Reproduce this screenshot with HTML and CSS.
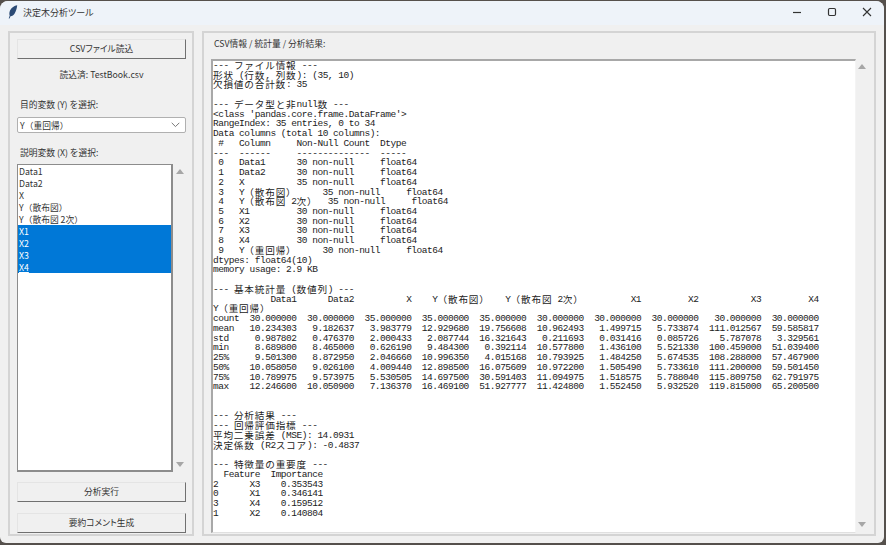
FILE: index.html
```html
<!DOCTYPE html>
<html lang="ja">
<head>
    <meta charset="UTF-8">
    <title>決定木分析ツール</title>
    <link rel="stylesheet" href="styles.css">
</head>
<body>
    <div class="window">
        <!-- Title bar -->
        <div class="titlebar">
            <svg class="app-icon" width="10" height="14" viewBox="0 0 10 14">
                <path d="M9.2 0.3C6.4 0.8 3.4 2.6 2 5.4C1.2 7.2 1.2 9.2 1.7 10.6L0.7 13.4L1.5 13.6L2.5 11.2C4.2 11.2 5.8 10 6.8 8.2C8.2 5.8 9 3 9.2 0.3Z" fill="#2b4a75"/>
            </svg>
            <span class="title">決定木分析ツール</span>
            <div class="win-controls">
                <svg width="12" height="12" viewBox="0 0 12 12"><path d="M2 6.5H10" stroke="#333" stroke-width="1.2"/></svg>
                <svg width="12" height="12" viewBox="0 0 12 12"><rect x="2.5" y="2.5" width="7" height="7" rx="1.2" fill="none" stroke="#333" stroke-width="1.2"/></svg>
                <svg width="12" height="12" viewBox="0 0 12 12"><path d="M2 2L10 10M10 2L2 10" stroke="#333" stroke-width="1.1"/></svg>
            </div>
        </div>

        <div class="content">
            <!-- Left controls -->
            <div class="panel left-panel">
                <button class="tk-button">CSVファイル読込</button>
                <div class="loaded-label">読込済: TestBook.csv</div>
                <div class="field-label target-label">目的変数 (Y) を選択:</div>
                <div class="combo">
                    <span>Y（重回帰）</span>
                    <svg width="9" height="6" viewBox="0 0 9 6"><path d="M0.7 0.8L4.5 4.6L8.3 0.8" fill="none" stroke="#777" stroke-width="1"/></svg>
                </div>
                <div class="field-label feature-label">説明変数 (X) を選択:</div>
                <div class="list-row">
                    <ul class="listbox">
                        <li>Data1</li>
                        <li>Data2</li>
                        <li>X</li>
                        <li>Y（散布図）</li>
                        <li>Y（散布図 2次）</li>
                        <li class="selected">X1</li>
                        <li class="selected">X2</li>
                        <li class="selected">X3</li>
                        <li class="selected active">X4</li>
                    </ul>
                    <div class="scrollbar list-scroll">
                        <span class="arrow-up"></span>
                        <span class="arrow-down"></span>
                    </div>
                </div>
                <button class="tk-button run-button">分析実行</button>
                <button class="tk-button summary-button">要約コメント生成</button>
            </div>

            <!-- Output -->
            <div class="panel right-panel">
                <div class="output-label">CSV情報 / 統計量 / 分析結果:</div>
                <div class="output-row">
<pre class="output">--- <span class="jp">ファイル情報</span> ---
<span class="jp">形状</span> (<span class="jp">行数</span>, <span class="jp">列数</span>): (35, 10)
<span class="jp">欠損値の合計数</span>: 35

--- <span class="jp">データ型と非</span>null<span class="jp">数</span> ---
&lt;class 'pandas.core.frame.DataFrame'&gt;
RangeIndex: 35 entries, 0 to 34
Data columns (total 10 columns):
 #   Column     Non-Null Count  Dtype
---  ------     --------------  -----
 0   Data1      30 non-null     float64
 1   Data2      30 non-null     float64
 2   X          35 non-null     float64
 3   Y<span class="jp">（散布図）</span>     35 non-null     float64
 4   Y<span class="jp">（散布図</span> 2<span class="jp">次）</span>  35 non-null     float64
 5   X1         30 non-null     float64
 6   X2         30 non-null     float64
 7   X3         30 non-null     float64
 8   X4         30 non-null     float64
 9   Y<span class="jp">（重回帰）</span>     30 non-null     float64
dtypes: float64(10)
memory usage: 2.9 KB

--- <span class="jp">基本統計量</span> (<span class="jp">数値列</span>) ---
           Data1      Data2          X    Y<span class="jp">（散布図）</span>   Y<span class="jp">（散布図</span> 2<span class="jp">次）</span>         X1         X2          X3         X4
Y<span class="jp">（重回帰）</span>
count  30.000000  30.000000  35.000000  35.000000  35.000000  30.000000  30.000000  30.000000   30.000000  30.000000
mean   10.234303   9.182637   3.983779  12.929680  19.756608  10.962493   1.499715   5.733874  111.012567  59.585817
std     0.987802   0.476370   2.000433   2.087744  16.321643   0.211693   0.031416   0.085726    5.787078   3.329561
min     8.689800   8.465000   0.626190   9.484300   0.392114  10.577800   1.436100   5.521330  100.459000  51.039400
25%     9.501300   8.872950   2.046660  10.996350   4.015168  10.793925   1.484250   5.674535  108.288000  57.467900
50%    10.058050   9.026100   4.009440  12.898500  16.075609  10.972200   1.505490   5.733610  111.200000  59.501450
75%    10.789975   9.573975   5.530505  14.697500  30.591403  11.094975   1.518575   5.788040  115.809750  62.791975
max    12.246600  10.050900   7.136370  16.469100  51.927777  11.424800   1.552450   5.932520  119.815000  65.200500


--- <span class="jp">分析結果</span> ---
--- <span class="jp">回帰評価指標</span> ---
<span class="jp">平均二乗誤差</span> (MSE): 14.0931
<span class="jp">決定係数</span> (R2<span class="jp">スコア</span>): -0.4837

--- <span class="jp">特徴量の重要度</span> ---
  Feature  Importance
2      X3    0.353543
0      X1    0.346141
3      X4    0.159512
1      X2    0.140804</pre>
                    <div class="scrollbar output-scroll">
                        <span class="arrow-up"></span>
                        <span class="arrow-down"></span>
                    </div>
                </div>
            </div>
        </div>
    </div>
</body>
</html>
```

FILE: styles.css
```css
html,
body {
    height: 100%;
}

body {
    margin: 0;
    background-color: #55504c;
    font-family: "Noto Sans CJK JP", sans-serif;
    font-size: 8.75px;
    color: #333;
    overflow: hidden;
}

.window {
    box-sizing: border-box;
    display: flex;
    flex-direction: column;
    width: 884px;
    height: 542px;
    margin-top: 1px;
    background-color: #f0f0f0;
    border-radius: 8px 8px 6px 6px;
}

/* Title bar */
.titlebar {
    box-sizing: border-box;
    display: flex;
    align-items: center;
    height: 24px;
    flex-shrink: 0;
    padding: 0 0 2px 8px;
    background-color: #eef3f9;
    border-radius: 8px 8px 0 0;
}

.app-icon {
    margin-right: 5px;
}

.title {
    font-size: 9px;
    font-feature-settings: "palt";
    color: #333;
}

.win-controls {
    display: flex;
    align-items: center;
    gap: 23px;
    margin-left: auto;
    margin-right: 11px;
}

/* Main layout */
.content {
    display: flex;
    flex: 1;
    min-height: 0;
    gap: 8px;
    padding: 6px 8px 7px 8px;
}

.panel {
    box-sizing: border-box;
    display: flex;
    flex-direction: column;
    border: 2px solid #d4d4d4;
}

.left-panel {
    width: 186px;
    padding: 6px 6px 1px 7px;
}

.right-panel {
    flex: 1;
    min-width: 0;
    padding: 4px 6px 1px 7px;
}

/* Left controls */
.tk-button {
    height: 20px;
    flex-shrink: 0;
    padding: 0 0 2px 0;
    background-color: #f0f0f0;
    border: 1px solid;
    border-color: #e4e4e4 #707070 #707070 #e4e4e4;
    font-family: inherit;
    font-size: 8.75px;
    font-feature-settings: "palt";
    color: #333;
}

.run-button {
    margin-top: 10px;
}

.summary-button {
    margin-top: 11px;
}

.loaded-label {
    margin-top: 9px;
    height: 14px;
    line-height: 14px;
    text-align: center;
}

.field-label {
    height: 14px;
    line-height: 14px;
    padding-left: 3px;
}

.target-label {
    margin-top: 16px;
}

.feature-label {
    margin-top: 13px;
}

.combo {
    box-sizing: border-box;
    display: flex;
    align-items: center;
    justify-content: space-between;
    height: 16px;
    margin-top: 5px;
    padding: 0 5px 0 2px;
    background-color: white;
    border: 1px solid #b0b0b0;
    border-radius: 2px;
}

.list-row {
    display: flex;
    flex: 1;
    min-height: 0;
    margin-top: 4px;
}

.listbox {
    box-sizing: border-box;
    width: 156px;
    margin: 0;
    padding: 0;
    list-style: none;
    background-color: white;
    border: 1px solid #8c8c8c;
    border-right-width: 2px;
    border-bottom-width: 2px;
}

.listbox li {
    height: 12px;
    padding-left: 1px;
    line-height: 13px;
}

.listbox li.selected {
    background-color: #0078d7;
    color: white;
}

.listbox li.active {
    text-decoration: underline;
}

/* Scrollbars */
.scrollbar {
    box-sizing: border-box;
    display: flex;
    flex-direction: column;
    justify-content: space-between;
    align-items: center;
    flex-shrink: 0;
}

.list-scroll {
    width: 13px;
    padding: 5px 0 5px 0;
}

.output-scroll {
    width: 12px;
    padding: 5px 0 6px 0;
}

.arrow-up {
    border-left: 4px solid transparent;
    border-right: 4px solid transparent;
    border-bottom: 5px solid #a6a6a6;
}

.arrow-down {
    border-left: 4px solid transparent;
    border-right: 4px solid transparent;
    border-top: 5px solid #a6a6a6;
}

/* Output area */
.output-label {
    height: 14px;
    line-height: 14px;
    padding-left: 3px;
    margin-bottom: 8px;
}

.output-row {
    display: flex;
    flex: 1;
    min-height: 0;
}

.output {
    box-sizing: border-box;
    flex: 1;
    min-width: 0;
    margin: 0;
    padding: 0;
    background-color: white;
    border: 2px solid #a8a8a8;
    border-right: 1px solid #f4f4f4;
    border-bottom: 1px solid #e0e0e0;
    font-family: "Liberation Mono", monospace;
    font-size: 9.5px;
    letter-spacing: -0.48px;
    line-height: 9.74px;
    color: #222;
}

/* full-width cells are two mono cells wide */
.jp {
    font-family: "Noto Sans CJK JP", sans-serif;
    font-size: 9.6px;
    letter-spacing: 0.84px;
    line-height: 0;
    vertical-align: -1px;
}
```
